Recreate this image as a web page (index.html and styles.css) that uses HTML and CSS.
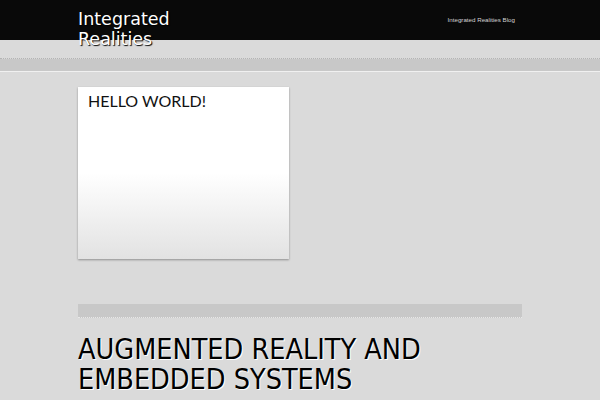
FILE: index.html
```html
<!DOCTYPE html>
<html>
<head>
<meta charset="utf-8">
<link rel="stylesheet" href="styles.css">
</head>
<body>
<header class="topbar">
  <div class="wrap topbar-inner">
    <h1 class="site-title">Integrated Realities</h1>
    <nav class="topnav"><a href="#">Integrated Realities Blog</a></nav>
  </div>
</header>
<div class="subgap"></div>
<div class="band"></div>
<main class="wrap">
  <div class="card">
    <h2 class="card-title">HELLO WORLD!</h2>
  </div>
  <div class="divider"></div>
  <h2 class="headline">AUGMENTED REALITY AND EMBEDDED SYSTEMS</h2>
</main>
</body>
</html>
```
FILE: styles.css
```css
html, body {
  margin: 0;
  padding: 0;
}
body {
  background: #dadada;
  font-family: "DejaVu Sans", sans-serif;
  overflow: hidden;
}
.wrap {
  width: 444px;
  margin: 0 auto;
}
.topbar {
  background: #090909;
  height: 40px;
}
.topbar-inner {
  display: flex;
  justify-content: space-between;
  align-items: flex-start;
}
.site-title {
  margin: 0;
  padding-top: 9px;
  width: 120px;
  font-size: 17.5px;
  line-height: 20px;
  font-weight: normal;
  color: #ffffff;
  text-shadow: 1px 1px 1px #000;
  position: relative;
  z-index: 2;
}
.topnav {
  padding-top: 13px;
  padding-right: 7px;
  line-height: 8px;
}
.topnav a {
  font-family: "Liberation Sans", sans-serif;
  font-size: 6.2px;
  color: #d4d4d4;
  text-decoration: none;
}
.subgap {
  height: 18px;
  border-bottom: 1px dotted #b4b4b4;
}
.band {
  height: 12px;
  background: #c8c8c8;
  border-bottom: 1px solid #f0f0f0;
}
main {
  padding-top: 15px;
}
.card {
  width: 211px;
  height: 172px;
  box-sizing: border-box;
  background: linear-gradient(to bottom, #ffffff 0%, #ffffff 50%, #e2e2e2 100%);
  box-shadow: 0 1px 2px rgba(0,0,0,0.35);
  padding: 4px 10px;
}
.card-title {
  margin: 0;
  font-family: "Lato", sans-serif;
  font-weight: normal;
  font-size: 16px;
  line-height: 20px;
  color: #111;
}
.divider {
  margin-top: 45px;
  height: 13px;
  background: #c8c8c8;
  border-bottom: 1px dotted #e8e8e8;
}
.headline {
  margin: 17px 0 0;
  font-family: "DejaVu Sans Condensed", "DejaVu Sans", sans-serif;
  font-stretch: condensed;
  font-weight: normal;
  font-size: 28.5px;
  line-height: 30px;
  color: #000;
  text-shadow: 1px 1px 0 #fff;
  width: 380px;
}
```
